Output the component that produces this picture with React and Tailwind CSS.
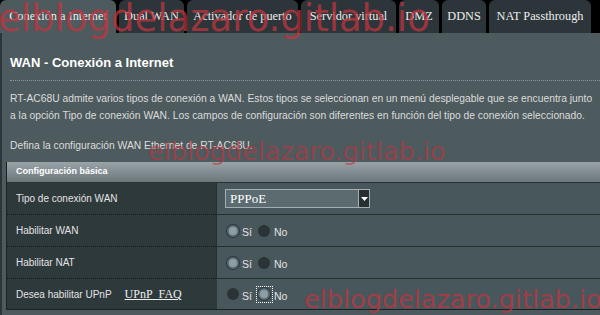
import React from "react";

const tabs = [
  { label: "Conexión a Internet", active: true, w: "w-[116px]" },
  { label: "Dual WAN", w: "w-[65px]" },
  { label: "Activador de puerto", w: "w-[111px]" },
  { label: "Servidor virtual", w: "w-[95px]" },
  { label: "DMZ", w: "w-[40px]" },
  { label: "DDNS", w: "w-[44px]" },
  { label: "NAT Passthrough", w: "w-[102px]" },
];

const Radio = ({ checked, focus }) => (
  <span
    className={`flex items-center justify-center w-[15px] h-[15px] ${
      focus ? "outline-1 outline-dotted outline-white" : ""
    }`}
  >
    <span
      className={`block w-[12px] h-[12px] rounded-full ${
        checked
          ? "bg-[#8c9fa6] border-2 border-[#5f6f75] shadow-[0_0_0_1px_#2b3437]"
          : "bg-[#2a3336]"
      }`}
    />
  </span>
);

const RadioPair = ({ value, focus }) => (
  <div className="flex items-center gap-[2px] text-[10.5px] text-[#e3e3e3]">
    <Radio checked={value === "si"} />
    <span className="mt-[5px] mr-[3px]">Sí</span>
    <Radio checked={value === "no"} focus={focus} />
    <span className="mt-[5px]">No</span>
  </div>
);

const Row = ({ label, children, last }) => (
  <div className={`flex ${last ? "h-[30px]" : "h-[32px]"}`}>
    <div
      className={`w-[209px] bg-[#2e393c] flex items-center pl-[9px] text-[10px] text-[#e3e3e3] ${
        last ? "" : "border-b border-dotted border-[#0f1416]"
      }`}
    >
      {label}
    </div>
    <div
      className={`flex-1 bg-[#48575c] flex items-center pl-[8px] border-l border-[#2e393c] ${
        last ? "" : "border-b border-[#26302f]"
      }`}
    >
      {children}
    </div>
  </div>
);

export default function App() {
  return (
    <div className="relative w-[600px] h-[315px] overflow-hidden bg-black font-['Liberation_Sans',Arial,sans-serif] flex flex-col">
      <div className="flex h-[33px] gap-[3px] items-end">
        {tabs.map((t, i) => (
          <div
            key={i}
            className={`${t.w} h-[33px] shrink-0 rounded-t-[6px] flex items-center justify-center whitespace-nowrap text-[12.3px] text-[#eeeeee] font-['Liberation_Serif',serif] ${
              t.active ? "bg-[#4d5a5e]" : "bg-[#2c363a]"
            }`}
          >
            {t.label}
          </div>
        ))}
      </div>

      <div className="flex-1 bg-[#4d5a5e] border-l-2 border-[#2c363a] pl-[4px]">
        <div className="pl-[4px] pt-[22px]">
          <h1 className="text-[13px] font-bold text-white leading-[16px]">
            WAN - Conexión a Internet
          </h1>
          <div className="mt-[9px] border-t border-dotted border-[#8a9599]" />
          <p className="mt-[9px] text-[10.3px] leading-[17px] text-[#dcdcdc] whitespace-nowrap">
            RT-AC68U admite varios tipos de conexión a WAN. Estos tipos se
            seleccionan en un menú desplegable que se encuentra junto
            <br />a la opción Tipo de conexión WAN. Los campos de configuración
            son diferentes en función del tipo de conexión seleccionado.
          </p>
          <p className="mt-[13px] text-[10.3px] leading-[17px] text-[#dcdcdc]">
            Defina la configuración WAN Ethernet de RT-AC68U.
          </p>
        </div>

        <div className="mt-[8px] border-l border-b border-[#1c2224]">
          <div className="h-[21px] bg-gradient-to-b from-[#9aa4a8] to-[#6b777b] flex items-center pl-[9px] text-[9px] font-bold text-white border-b border-[#2a3235]">
            Configuración básica
          </div>
          <Row label="Tipo de conexión WAN">
            <div className="flex w-[145px] h-[19px] border border-[#a4adb0] bg-[#5b6b70]">
              <span className="flex-1 pl-[4px] text-[13px] leading-[17px] text-white font-['Liberation_Serif',serif]">
                PPPoE
              </span>
              <span className="w-[11px] bg-[#263033] border-l border-[#a4adb0] flex items-center justify-center">
                <svg width="7" height="4" viewBox="0 0 7 4">
                  <path d="M0 0h7L3.5 4z" fill="#fff" />
                </svg>
              </span>
            </div>
          </Row>
          <Row label="Habilitar WAN">
            <RadioPair value="si" />
          </Row>
          <Row label="Habilitar NAT">
            <RadioPair value="si" />
          </Row>
          <Row
            last
            label={
              <span className="flex items-center">
                Desea habilitar UPnP
                <span className="ml-[13px] underline font-['Liberation_Serif',serif] text-[12px] text-[#eeeeee]">
                  UPnP_FAQ
                </span>
              </span>
            }
          >
            <RadioPair value="no" focus />
          </Row>
        </div>
      </div>

      <div className="pointer-events-none absolute left-[-2px] top-[-1px] text-[37px] leading-[40px] text-[#c0343f]/75 font-['DejaVu_Sans',sans-serif] whitespace-nowrap">
        elblogdelazaro.gitlab.io
      </div>
      <div className="pointer-events-none absolute left-[148px] top-[136px] text-[25.5px] leading-[30px] text-[#c0343f]/60 font-['DejaVu_Sans',sans-serif] whitespace-nowrap">
        elblogdelazaro.gitlab.io
      </div>
      <div className="pointer-events-none absolute left-[304px] top-[284px] text-[25.5px] leading-[30px] text-[#c0343f]/75 font-['DejaVu_Sans',sans-serif] whitespace-nowrap">
        elblogdelazaro.gitlab.io
      </div>
    </div>
  );
}
